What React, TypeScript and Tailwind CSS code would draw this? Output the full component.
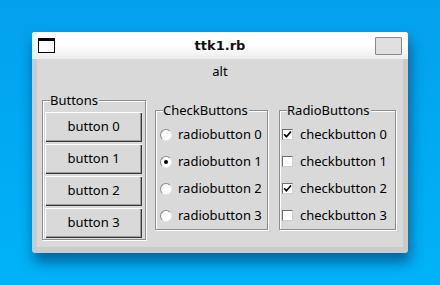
import React from 'react';

const ui = { fontFamily: '"Noto Sans", "Open Sans", sans-serif' };

function Group({ label, className, children }: { label: string; className: string; children: React.ReactNode }) {
  return (
    <div className={`relative border border-[#8e8e8e] shadow-[1px_1px_0_#fff,inset_1px_1px_0_#fff] ${className}`}>
      <span className="absolute left-[7px] top-[-10px] bg-[#d9d9d9] pr-[1px] text-[13px] leading-[18px] text-black">{label}</span>
      {children}
    </div>
  );
}

function Radio({ on }: { on?: boolean }) {
  return (
    <span className="flex h-[12px] w-[12px] items-center justify-center rounded-full border border-[#8a8a8a] border-b-[#e8e8e8] border-r-[#e8e8e8] bg-white">
      {on && <span className="h-[4px] w-[4px] rounded-full bg-black" />}
    </span>
  );
}

function Check({ on }: { on?: boolean }) {
  return (
    <span className="flex h-[11px] w-[11px] items-center justify-center border border-[#6e6e6e] border-b-[#d0d0d0] border-r-[#d0d0d0] bg-white">
      {on && (
        <svg width="9" height="9" viewBox="0 0 9 9">
          <polyline points="1.2,4.2 3.4,6.8 8,1.5" fill="none" stroke="#000" strokeWidth="1.7" />
        </svg>
      )}
    </span>
  );
}

export default function App() {
  const items = [0, 1, 2, 3];
  return (
    <div className="h-[285px] w-[440px] overflow-hidden bg-gradient-to-b from-[#03a0ee] to-[#00b3f8] pl-[32px] pt-[32px]" style={ui}>
      <div className="flex h-[221px] w-[376px] flex-col rounded-[3px] bg-[#cbcbcb] shadow-[2px_9px_14px_rgba(0,35,80,0.55)]">
        {/* title bar */}
        <div className="relative flex h-[27px] items-center justify-center rounded-t-[3px] bg-gradient-to-b from-white via-white to-[#ececec]">
          <div className="absolute left-[6px] top-[6px] h-[15px] w-[17px] border-[1.5px] border-t-[3px] border-black bg-white" />
          <span className="text-[13px] font-bold text-[#111]" style={{ fontFamily: '"DejaVu Sans", sans-serif' }}>ttk1.rb</span>
          <div className="absolute right-[6px] top-[5px] h-[18px] w-[27px] rounded-[1px] border border-[#888] bg-[#e0e0e0]" />
        </div>
        {/* content */}
        <div className="mx-[5px] mb-[6px] flex flex-1 flex-col bg-[#d9d9d9]">
          <div className="flex h-[24px] items-center justify-center pt-[1px] text-[13px] text-black">alt</div>
          <div className="mt-[17px] flex items-center pl-[5px]">
            <Group label="Buttons" className="w-[104px] pb-[1px] pl-[2px] pt-[11px]">
              <div className="flex flex-col gap-[2px]">
                {items.map((i) => (
                  <div
                    key={i}
                    className="flex h-[30px] w-[97px] items-center justify-center bg-[#d9d9d9] text-[13px] text-black shadow-[inset_1px_1px_0_#fff,inset_-1px_-1px_0_#3a3a3a,inset_-2px_-2px_0_#9a9a9a]"
                  >
                    button {i}
                  </div>
                ))}
              </div>
            </Group>
            <Group label="CheckButtons" className="ml-[9px] w-[113px] pl-[4px] pt-[10px]">
              {items.map((i) => (
                <div key={i} className="flex h-[27px] items-center gap-[6px] text-[13px] text-black">
                  <Radio on={i === 1} />
                  <span>radiobutton {i}</span>
                </div>
              ))}
            </Group>
            <Group label="RadioButtons" className="ml-[11px] w-[117px] pl-[2px] pt-[10px]">
              {items.map((i) => (
                <div key={i} className="flex h-[27px] items-center gap-[7px] text-[13px] text-black">
                  <Check on={i === 0 || i === 2} />
                  <span>checkbutton {i}</span>
                </div>
              ))}
            </Group>
          </div>
        </div>
      </div>
    </div>
  );
}
